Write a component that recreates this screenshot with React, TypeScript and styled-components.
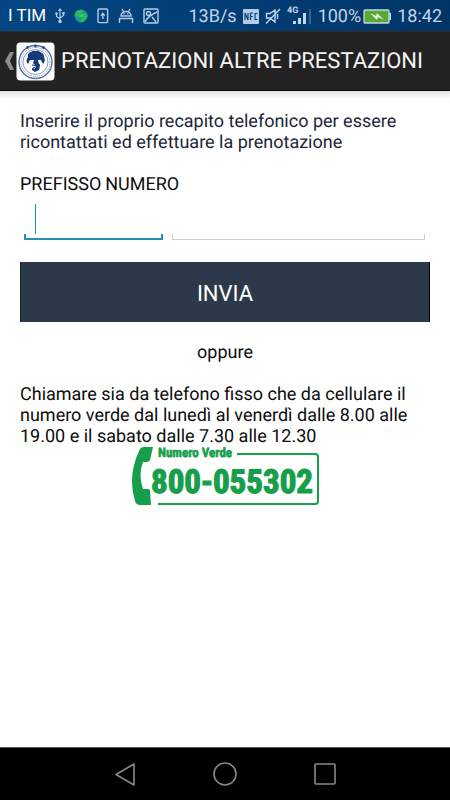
import React from "react";
import styled, { createGlobalStyle } from "styled-components";

const GlobalStyle = createGlobalStyle`
  * { box-sizing: border-box; }
  body { margin: 0; background: #fff; font-family: Roboto, "Noto Sans", sans-serif; text-rendering: geometricPrecision; }
`;

const Screen = styled.div`
  display: flex;
  flex-direction: column;
  min-height: 100vh;
`;

const StatusBar = styled.div`
  display: flex;
  justify-content: space-between;
  align-items: center;
  height: 31px;
  padding: 1px 8px 0;
  background: linear-gradient(90deg, #034684, #023567);
  color: #c3d5ea;
  font-size: 18px;
  white-space: nowrap;
`;

const StatusGroup = styled.div<{ $gap: number }>`
  display: flex;
  align-items: center;
  gap: ${(p) => p.$gap}px;
`;

const Carrier = styled.span`
  color: #fff;
  font-size: 17px;
`;

const Battery = styled.div`
  display: flex;
  align-items: center;
  gap: 2px;
`;

const AppBar = styled.header`
  display: flex;
  align-items: center;
  height: 60px;
  padding-left: 5px;
  background: #222;
  border-top: 1px solid #2d2c2a;
  border-bottom: 1px solid #111;
  color: #f4f4f4;

  svg {
    flex-shrink: 0;
  }
`;

const BackButton = styled.button`
  display: flex;
  align-items: center;
  padding: 0;
  border: 0;
  background: none;
`;

const Title = styled.h1`
  margin: 2px 0 0 6px;
  font-size: 22px;
  line-height: 28px;
  font-weight: 400;
  white-space: nowrap;
`;

const Content = styled.main`
  flex: 1;
  padding: 20px 20px 0;
  background: linear-gradient(#e2e2e2, #fff 8px);
  color: #0c0c0c;
  font-size: 18px;
  line-height: 21px;
`;

const Intro = styled.p`
  margin: 0;
  color: #1b2638;
`;

const PhoneForm = styled.form`
  display: flex;
  flex-direction: column;
  margin-top: 21px;
`;

const Labels = styled.div`
  display: flex;
  gap: 4px;
`;

const Fields = styled.div`
  display: flex;
  gap: 9px;
  padding: 8px 5px 0 4px;
`;

const Field = styled.div<{ $grow: number }>`
  position: relative;
  flex: ${(p) => p.$grow} 1 0;
  display: flex;
  height: 37px;
`;

const PhoneInput = styled.input<{ $active?: boolean }>`
  width: 100%;
  min-width: 0;
  padding: 0 10px;
  border: 0;
  outline: 0;
  font: inherit;
  background-color: transparent;
  --line: ${(p) => (p.$active ? "#2490b8" : "#cfcfcf")};
  background-image: linear-gradient(var(--line), var(--line)), linear-gradient(var(--line), var(--line)),
    linear-gradient(var(--line), var(--line));
  background-repeat: no-repeat;
  background-position: left bottom, left bottom, right bottom;
  background-size: ${(p) => (p.$active ? "100% 2px, 2px 6px, 2px 6px" : "100% 1px, 1px 6px, 1px 6px")};
`;

const Caret = styled.span`
  position: absolute;
  left: 11px;
  top: 1px;
  width: 1px;
  height: 30px;
  background: #119ca5;
`;

const SubmitButton = styled.button`
  height: 60px;
  margin-top: 22px;
  padding: 2px 0 0;
  border: 0;
  border-left: 1px solid #1b2430;
  border-right: 1px solid #000;
  background: #2c394b;
  color: #fff;
  font-family: inherit;
  font-size: 22px;
`;

const Separator = styled.p`
  margin: 20px 0 21px;
  text-align: center;
`;

const CallInfo = styled.p`
  margin: 0;
`;

const TollFree = styled.a`
  display: block;
  width: 190px;
  height: 62px;
  margin: 0 auto;
`;

const NavBar = styled.nav`
  display: flex;
  justify-content: center;
  gap: 60px;
  height: 53px;
  background: #000;
  border-top: 1px solid #555;
`;

const NavButton = styled.button`
  display: flex;
  align-items: center;
  justify-content: center;
  width: 40px;
  padding: 0;
  border: 0;
  background: none;
`;

const UsbIcon = () => (
  <svg width="10" height="16" viewBox="0 0 10 16" fill="none" stroke="#b5cbe5" strokeWidth="1.2">
    <path d="M5 2v11M1.500 6v2.500L5 11M8.500 5.500v2L5 10" />
    <path d="M5 0 7 3H3z" fill="#b5cbe5" stroke="none" />
    <circle cx="5" cy="13.500" r="1.800" fill="#b5cbe5" stroke="none" />
    <circle cx="1.500" cy="5.500" r="1.300" fill="#b5cbe5" stroke="none" />
    <path d="M7.300 4h2.400v2.400H7.300z" fill="#b5cbe5" stroke="none" />
  </svg>
);

const GlobeIcon = () => (
  <svg width="14" height="14" viewBox="0 0 14 14">
    <circle cx="7" cy="7" r="6.500" fill="#238ea0" />
    <path d="M2 2.500Q6-.5 10 1.500L8 4 9 6 5 9 2 6.500.8 7Q.5 4 2 2.500zM9 6l3-3q2 3 1 6l-4 4-4 .3L7 9z" fill="#28b85e" />
    <path d="m3 6 3 1 5-3-4 4z" fill="#75dc58" />
  </svg>
);

const UploadIcon = () => (
  <svg width="12" height="16" viewBox="0 0 12 16" fill="none" stroke="#b5cbe5" strokeWidth="1.400">
    <rect x="1" y="1" width="9.600" height="13.600" rx="1" />
    <path d="M5.800 11V6M3.800 7.600l2-2.200 2 2.200" />
  </svg>
);

const AndroidIcon = () => (
  <svg width="16" height="16" viewBox="0 0 16 16" fill="none" stroke="#b5cbe5" strokeWidth="1.400">
    <path d="M3 8c0-6 10-6 10 0zM4 1l1.500 2.500M12 1l-1.500 2.500M1.500 15v-4.500h13V15" />
    <path d="M5.500 5.800h1.300M9.200 5.800h1.300" />
  </svg>
);

const PictureIcon = () => (
  <svg width="16" height="16" viewBox="0 0 16 16" fill="none" stroke="#b5cbe5" strokeWidth="1.400">
    <rect x="1" y="1" width="14" height="14" rx="1" />
    <circle cx="5.500" cy="5.500" r="2" />
    <path d="M2 14Q5 8 14 4M9 9l4 5" />
  </svg>
);

const NfcIcon = () => (
  <svg width="16" height="15" viewBox="0 0 16 15">
    <rect width="16" height="15" rx="1" fill="#b5cbe5" />
    <path d="M2 11V4l3 7V4M7.500 11V4H10M7.500 7.500h2.300M14.500 4.500H12v6h2.500" fill="none" stroke="#07437a" strokeWidth="1.200" />
  </svg>
);

const MuteIcon = () => (
  <svg width="16" height="16" viewBox="0 0 16 16" fill="none" stroke="#c3d5ea" strokeWidth="1.400">
    <path d="M1.500 5.500H5L10 2v12l-5-4H1.500zM1 15.500 15 1M12.500 6v5" />
  </svg>
);

const SignalIcon = () => (
  <svg width="25" height="22" viewBox="0 0 25 22">
    <text x="0" y="8" fill="#c3d5ea" fontFamily="Roboto, sans-serif" fontSize="9" fontWeight="700">4G</text>
    <path d="M6 16h3v3H6zM11 13h3v6h-3zM16 8h3v11h-3z" fill="#c3d5ea" />
    <path d="M22 4h2v15h-2z" fill="#3b628e" />
  </svg>
);

const BatteryIcon = () => (
  <svg width="28" height="15" viewBox="0 0 28 15">
    <path d="M26 4h2v7h-2z" fill="#c3d5ea" />
    <rect x="1" y="1" width="25" height="13" rx="1" fill="#56ac32" stroke="#c3d5ea" strokeWidth="1.300" />
    <path d="m7 4 6 3 1-3 7 7-6-3-1 3z" fill="#e4f0ec" />
  </svg>
);

const HospitalLogo = () => (
  <svg width="39" height="39" viewBox="0 0 39 39" role="img" aria-label="Logo">
    <rect x=".5" y=".5" width="38" height="38" rx="4" fill="#fff" />
    <g fill="none" stroke="#5272a4">
      <circle cx="19.500" cy="20" r="16.500" strokeWidth="1.400" />
      <circle cx="19.500" cy="20" r="14.500" strokeWidth=".8" strokeDasharray="1 1" />
      <circle cx="19.500" cy="20" r="12.500" strokeWidth=".7" />
    </g>
    <path d="M10.500 5.500h2M18.500 4h2M26.500 5.500h2" stroke="#173b78" strokeWidth="2.400" />
    <path
      d="M12 15q-1-4 3-5 2-2 4-1 4-1 5 1 4 1 4 5 2 4-1 7l-2-4h-3q0 3 2 5l-1 5-4 2-3-2v-2l3 1 1-3-3-3 1-3h-4l-2 4q-3-3 0-7z"
      fill="#153a7b"
    />
    <path d="M16 23q5 0 7 4M22 24l2-1M20 27q-2-3-3 0" fill="none" stroke="#153a7b" strokeWidth="1.200" />
  </svg>
);

const TollFreeLogo = () => (
  <svg width="190" height="62" viewBox="0 0 190 62" role="img" aria-label="Numero Verde 800-055302">
    <g fill="#169f4b">
      <path d="M10 2Q11 0 14 0h9l-3 13q-1 2-3 2h-4q-5 13 0 27h5q2 0 2 2l1 14H10Q6 58 5 54-3 28 10 2z" />
      <g
        fontFamily="'Liberation Sans Narrow', 'Roboto Condensed', 'Liberation Sans', sans-serif"
        fontWeight="700"
        stroke="#169f4b"
      >
        <text x="28" y="10" fontSize="13" strokeWidth=".6">Numero Verde</text>
        <text x="21" y="46" fontSize="33" strokeWidth="1.200">800-055302</text>
      </g>
    </g>
    <path d="M107 7h78q3 0 3 3v44q0 3-3 3H28" fill="none" stroke="#169f4b" strokeWidth="2" />
  </svg>
);

export default function App() {
  return (
    <Screen>
      <GlobalStyle />
      <StatusBar>
        <StatusGroup $gap={9}>
          <Carrier>I TIM</Carrier>
          <UsbIcon />
          <GlobeIcon />
          <UploadIcon />
          <AndroidIcon />
          <PictureIcon />
        </StatusGroup>
        <StatusGroup $gap={6}>
          <span>13B/s</span>
          <NfcIcon />
          <MuteIcon />
          <SignalIcon />
          <Battery>
            <span>100%</span>
            <BatteryIcon />
          </Battery>
          <span>18:42</span>
        </StatusGroup>
      </StatusBar>

      <AppBar>
        <BackButton type="button" aria-label="Indietro">
          <svg width="11" height="20" viewBox="0 0 11 20">
            <path d="M5 1h4L5 10l4 9H5L0 10z" fill="#8c8c8c" />
          </svg>
        </BackButton>
        <HospitalLogo />
        <Title>PRENOTAZIONI ALTRE PRESTAZIONI</Title>
      </AppBar>

      <Content>
        <Intro>Inserire il proprio recapito telefonico per essere ricontattati ed effettuare la prenotazione</Intro>
        <PhoneForm onSubmit={(e) => e.preventDefault()}>
          <Labels>
            <label htmlFor="prefix">PREFISSO</label>
            <label htmlFor="number">NUMERO</label>
          </Labels>
          <Fields>
            <Field $grow={139}>
              <PhoneInput id="prefix" type="tel" $active />
              <Caret />
            </Field>
            <Field $grow={253}>
              <PhoneInput id="number" type="tel" />
            </Field>
          </Fields>
          <SubmitButton type="submit">INVIA</SubmitButton>
        </PhoneForm>
        <Separator>oppure</Separator>
        <CallInfo>
          Chiamare sia da telefono fisso che da cellulare il numero verde dal lunedì al venerdì dalle 8.00 alle 19.00 e il
          sabato dalle 7.30 alle 12.30
        </CallInfo>
        <TollFree href="tel:800055302">
          <TollFreeLogo />
        </TollFree>
      </Content>

      <NavBar>
        <NavButton type="button" aria-label="Indietro">
          <svg width="24" height="26" viewBox="0 0 24 26" fill="none" stroke="#888" strokeWidth="1.600" strokeLinejoin="round">
            <path d="M21 3v21L3 13.500z" />
          </svg>
        </NavButton>
        <NavButton type="button" aria-label="Home">
          <svg width="26" height="26" viewBox="0 0 26 26" fill="none" stroke="#888" strokeWidth="1.600">
            <circle cx="13" cy="13" r="11" />
          </svg>
        </NavButton>
        <NavButton type="button" aria-label="App recenti">
          <svg width="24" height="24" viewBox="0 0 24 24" fill="none" stroke="#888" strokeWidth="1.600">
            <rect x="2" y="2" width="20" height="20" rx="1" />
          </svg>
        </NavButton>
      </NavBar>
    </Screen>
  );
}
